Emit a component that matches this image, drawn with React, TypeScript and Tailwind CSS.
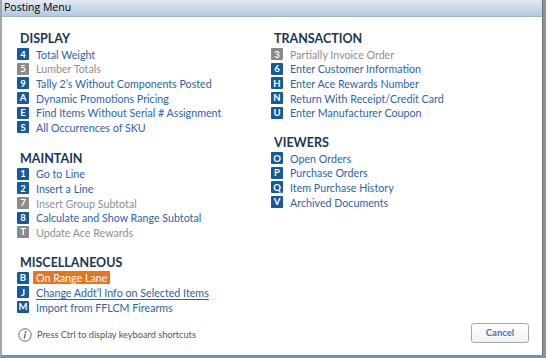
import React from "react";

type Item = { key: string; label: string; disabled?: boolean; highlight?: boolean; underline?: boolean };
type Section = { title: string; items: Item[] };

const display: Section = {
  title: "DISPLAY",
  items: [
    { key: "4", label: "Total Weight" },
    { key: "5", label: "Lumber Totals", disabled: true },
    { key: "9", label: "Tally 2\u2019s Without Components Posted" },
    { key: "A", label: "Dynamic Promotions Pricing" },
    { key: "E", label: "Find Items Without Serial # Assignment" },
    { key: "S", label: "All Occurrences of SKU" },
  ],
};

const maintain: Section = {
  title: "MAINTAIN",
  items: [
    { key: "1", label: "Go to Line" },
    { key: "2", label: "Insert a Line" },
    { key: "7", label: "Insert Group Subtotal", disabled: true },
    { key: "8", label: "Calculate and Show Range Subtotal" },
    { key: "T", label: "Update Ace Rewards", disabled: true },
  ],
};

const misc: Section = {
  title: "MISCELLANEOUS",
  items: [
    { key: "B", label: "On Range Lane", highlight: true },
    { key: "J", label: "Change Addt\u2019l Info on Selected Items", underline: true },
    { key: "M", label: "Import from FFLCM Firearms" },
  ],
};

const transaction: Section = {
  title: "TRANSACTION",
  items: [
    { key: "3", label: "Partially Invoice Order", disabled: true },
    { key: "6", label: "Enter Customer Information" },
    { key: "H", label: "Enter Ace Rewards Number" },
    { key: "N", label: "Return With Receipt/Credit Card" },
    { key: "U", label: "Enter Manufacturer Coupon" },
  ],
};

const viewers: Section = {
  title: "VIEWERS",
  items: [
    { key: "O", label: "Open Orders" },
    { key: "P", label: "Purchase Orders" },
    { key: "Q", label: "Item Purchase History" },
    { key: "V", label: "Archived Documents" },
  ],
};

function MenuSection({ section }: { section: Section }) {
  return (
    <div>
      <h3 className="text-[12.5px] font-bold leading-[16px] text-[#1c3557] pl-[3px]">{section.title}</h3>
      <ul>
        {section.items.map((item) => (
          <li key={item.key} className="flex items-center h-[14.6px]">
            <span
              className={
                "w-[12px] h-[12px] flex items-center justify-center text-[9.5px] leading-none font-bold text-white rounded-[1px] " +
                (item.disabled ? "bg-[#8a8a8a]" : "bg-[#165a9c]")
              }
            >
              {item.key}
            </span>
            <span
              className={
                "ml-[4px] px-[3px] text-[10.7px] leading-[13px] " +
                (item.highlight
                  ? "bg-[#e8751c] text-white"
                  : item.disabled
                  ? "text-[#8f8f8f]"
                  : "text-[#2b63ae]") +
                (item.underline ? " underline underline-offset-2" : "")
              }
            >
              {item.label}
            </span>
          </li>
        ))}
      </ul>
    </div>
  );
}

export default function App() {
  return (
    <div
      className="w-[546px] h-[358px] bg-[#8d9499] flex overflow-hidden"
      style={{ fontFamily: "Lato, 'Noto Sans', sans-serif" }}
    >
      <div className="w-[543px] h-[357px] flex flex-col bg-white border-l-2 border-[#a3a7ab] border-r border-r-[#6f7478] border-b-2 border-b-[#6e8fb0]">
        {/* title bar */}
        <div className="h-[17px] flex items-center pl-[2px] bg-gradient-to-b from-[#e4e9f0] to-[#b3c8e4] border-b border-[#9db3cf]">
          <span className="text-[10.5px] text-black" style={{ fontFamily: "'Open Sans', sans-serif" }}>
            Posting Menu
          </span>
        </div>

        <div className="flex-1 flex flex-col">
          <div className="flex flex-1">
            {/* left column */}
            <div className="w-[269px] pl-[15px] pt-[14px] flex flex-col">
              <MenuSection section={display} />
              <div className="mt-[16px]">
                <MenuSection section={maintain} />
              </div>
              <div className="mt-[15px]">
                <MenuSection section={misc} />
              </div>
            </div>
            {/* right column */}
            <div className="flex-1 pt-[14px] flex flex-col">
              <MenuSection section={transaction} />
              <div className="mt-[15px]">
                <MenuSection section={viewers} />
              </div>
            </div>
          </div>

          {/* footer */}
          <div className="flex items-center justify-between pl-[16px] pr-[13px] mb-[12px]">
            <div className="flex items-center gap-[5px] mt-[4px]">
              <svg width="14" height="14" viewBox="0 0 14 14">
                <circle cx="7" cy="7" r="6.2" fill="none" stroke="#6b6b6b" strokeWidth="1" />
                <circle cx="7.5" cy="4" r="0.9" fill="#6b6b6b" />
                <path d="M7.2 6 L6.3 10.2" stroke="#6b6b6b" strokeWidth="1.3" strokeLinecap="round" />
              </svg>
              <span className="text-[9.2px] text-[#555]">Press Ctrl to display keyboard shortcuts</span>
            </div>
            <button className="w-[58px] h-[20px] rounded-[3px] border border-[#a9a9a9] bg-gradient-to-b from-white to-[#f1f1f1] text-[9.5px] font-bold text-[#3a78c9]">
              Cancel
            </button>
          </div>
        </div>
      </div>
    </div>
  );
}
